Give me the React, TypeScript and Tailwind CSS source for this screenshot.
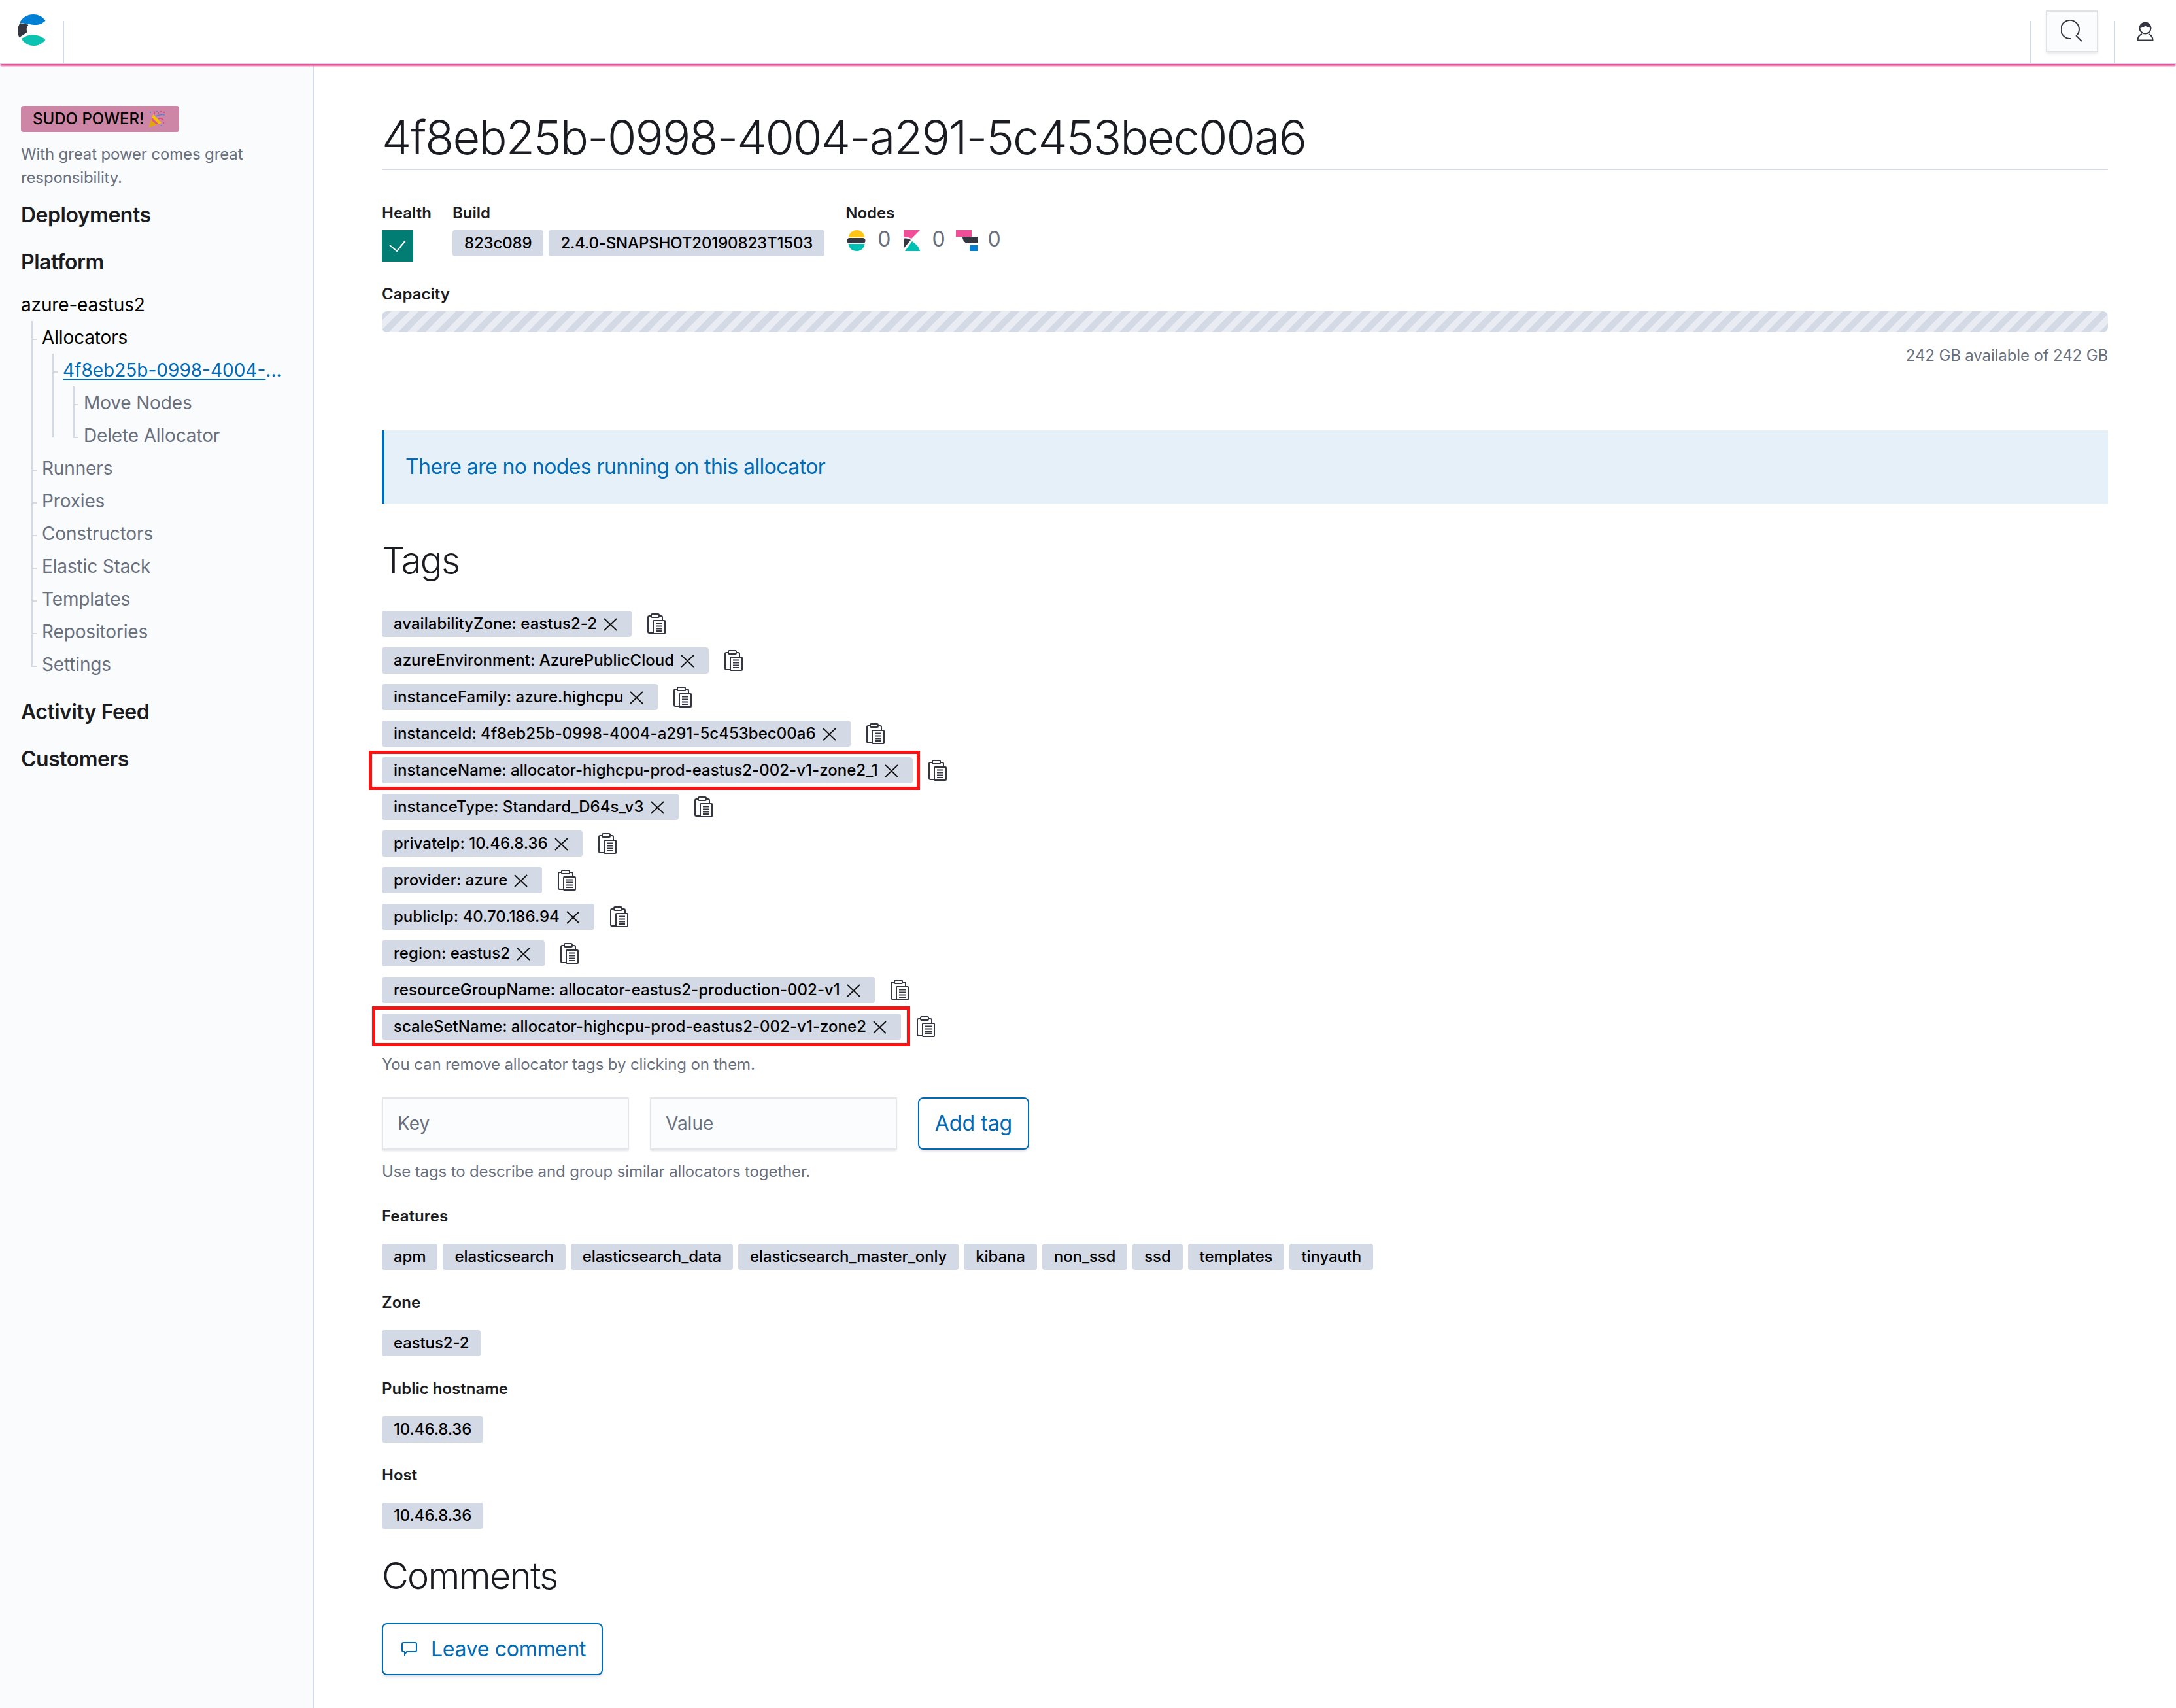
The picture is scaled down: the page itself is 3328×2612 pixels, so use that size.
import React from 'react';

const tags = [
    { text: 'availabilityZone: eastus2-2' },
    { text: 'azureEnvironment: AzurePublicCloud' },
    { text: 'instanceFamily: azure.highcpu' },
    { text: 'instanceId: 4f8eb25b-0998-4004-a291-5c453bec00a6' },
    { text: 'instanceName: allocator-highcpu-prod-eastus2-002-v1-zone2_1', box: 'first' },
    { text: 'instanceType: Standard_D64s_v3' },
    { text: 'privateIp: 10.46.8.36' },
    { text: 'provider: azure' },
    { text: 'publicIp: 40.70.186.94' },
    { text: 'region: eastus2' },
    { text: 'resourceGroupName: allocator-eastus2-production-002-v1' },
    { text: 'scaleSetName: allocator-highcpu-prod-eastus2-002-v1-zone2', box: 'second' },
];

const features = ['apm', 'elasticsearch', 'elasticsearch_data', 'elasticsearch_master_only', 'kibana', 'non_ssd', 'ssd', 'templates', 'tinyauth'];

const Logo = () => (
    <svg width="45" height="50" viewBox="78 63 134 150" className="ml-[26px] mt-[21px]">
        <path fill="#0080d5" d="M90 104C102 80 125 66 152 66C175 66 195 76 208 95C195 106 182 113 168 114C155 115 145 112 130 110C118 108 102 106 90 104Z" />
        <path fill="#343741" d="M92 106L130 113C122 125 118 135 126 147L88 172C78 150 78 125 92 106Z" />
        <path fill="#0cc2b0" d="M98 178C112 168 128 160 152 160C170 162 190 165 208 182C195 200 175 210 152 210C130 210 110 198 98 178Z" />
    </svg>
);

const Popper = () => (
    <svg width="26" height="26" viewBox="0 0 26 26" className="ml-[7px]">
        <path fill="#f7c000" d="M1 25L7 6L20 19Z" />
        <path fill="#e0a800" d="M1 25L4.500 14L12 21.500Z" />
        <path fill="#d9578f" d="M5.500 11L15 20L12 21.300L4.300 14.500Z" />
        <path fill="none" stroke="#3f8fe0" strokeWidth="1.500" d="M11 9C15 7 20 6 25 7" />
        <path fill="none" stroke="#e0457f" strokeWidth="1.500" d="M9 6C10 4 9 2 8 1M15 13C18 11 21 12 23 15" />
        <path fill="#e0457f" d="M18 0h2v2h-2zM23 2h2v2h-2zM22 18h2v2h-2zM14 3h2v2h-2z" />
        <path fill="#3f8fe0" d="M2 2h2v2H2zM12 0h2v2h-2zM19 22h2v2h-2z" />
    </svg>
);

const Cross = () => (
    <svg width="21" height="20" viewBox="0 0 21 20" className="ml-[10px] mr-1 mt-[2px] shrink-0">
        <path fill="none" stroke="#111" strokeWidth="1.8" d="M1 1L20 19M20 1L1 19" />
    </svg>
);

const CopyIcon = () => (
    <svg width="28" height="32" viewBox="0 0 28 32" className="shrink-0">
        <g fill="none" stroke="#343741" strokeWidth="2">
            <path d="M6 4H3a2 2 0 0 0-2 2v22a2 2 0 0 0 2 2h6" />
            <path d="M18 4h3a2 2 0 0 1 2 2v5" />
            <rect x="6" y="1" width="12" height="5" rx="1.5" />
            <rect x="9" y="11" width="18" height="20" rx="1" />
            <path d="M13 15.500h10M13 19.500h10M13 23.500h10M13 27h10" />
        </g>
    </svg>
);

const Badge: React.FC<{ children: React.ReactNode; className?: string }> = ({ children, className }) => (
    <span className={`inline-flex h-10 items-center whitespace-nowrap rounded-[4px] bg-[#d3dae6] px-[18px] text-[24px] font-medium text-black ${className || ''}`}>{children}</span>
);

const Label: React.FC<{ children: React.ReactNode; className?: string }> = ({ children, className }) => (
    <div className={`text-[24px] leading-[36px] font-semibold text-[#1a1c21] ${className || ''}`}>{children}</div>
);

// one row of the side tree, with the little tick going out of the vertical line
const TreeItem: React.FC<{ children: React.ReactNode; sub?: React.ReactNode; muted?: boolean }> = ({ children, sub, muted }) => (
    <li className="relative">
        <div className="absolute left-0 top-[27px] h-[2px] w-2 bg-[#d3dae6]" />
        <div className={`flex h-[50px] items-center pl-4 text-[28px] tracking-[-0.15px] ${muted ? 'text-[#69707d]' : 'text-black'}`}>{children}</div>
        {sub}
    </li>
);

const TreeList: React.FC<{ children: React.ReactNode; className: string }> = ({ children, className }) => (
    <ul className={`relative ${className}`}>
        <div className="absolute bottom-[22px] left-0 top-0 w-[2px] bg-[#d3dae6]" />
        {children}
    </ul>
);

const Sidebar = () => (
    <aside className="w-[480px] shrink-0 border-r-2 border-[#d3dae6] bg-[#fafbfd] pl-8 pt-16">
        <div className="flex h-10 w-[242px] items-center rounded-[4px] bg-[#ce86a6] pl-[18px] text-[24px] font-medium text-black">
            SUDO POWER!
            <Popper />
        </div>
        <p className="mt-4 w-[380px] text-[24px] leading-[36px] tracking-[-0.13px] text-[#69707d]">With great power comes great responsibility.</p>
        <div className="mt-[19px] text-[32px] leading-[40px] font-semibold tracking-[-0.5px] text-[#1a1c21]">Deployments</div>
        <div className="mt-8 text-[32px] leading-[40px] font-semibold tracking-[-0.5px] text-[#1a1c21]">Platform</div>
        <div className="mt-5 flex h-[50px] items-center text-[28px] tracking-[-0.15px] text-black">azure-eastus2</div>
        <TreeList className="ml-4">
            <TreeItem
                sub={
                    <TreeList className="ml-8">
                        <TreeItem
                            sub={
                                <TreeList className="ml-8">
                                    <TreeItem muted>Move Nodes</TreeItem>
                                    <TreeItem muted>Delete Allocator</TreeItem>
                                </TreeList>
                            }
                        >
                            <span className="tracking-normal text-[#006bb4]">
                                <span className="underline underline-offset-[3px]">4f8eb25b-0998-4004-</span>...
                            </span>
                        </TreeItem>
                    </TreeList>
                }
            >
                Allocators
            </TreeItem>
            <TreeItem muted>Runners</TreeItem>
            <TreeItem muted>Proxies</TreeItem>
            <TreeItem muted>Constructors</TreeItem>
            <TreeItem muted>Elastic Stack</TreeItem>
            <TreeItem muted>Templates</TreeItem>
            <TreeItem muted>Repositories</TreeItem>
            <TreeItem muted>Settings</TreeItem>
        </TreeList>
        <div className="mt-[28px] text-[32px] leading-[40px] font-semibold tracking-[-0.5px] text-[#1a1c21]">Activity Feed</div>
        <div className="mt-8 text-[32px] leading-[40px] font-semibold tracking-[-0.5px] text-[#1a1c21]">Customers</div>
    </aside>
);

const Header = () => (
    <header className="relative z-10 flex h-[98px] border-b-2 border-[#d3dae6] bg-white shadow-[0_4px_2px_-1px_#f04e98]">
        <div className="w-[96px] shrink-0">
            <Logo />
        </div>
        <div className="mt-8 h-16 w-[2px] bg-[#d3dae6]" />
        <div className="flex-1" />
        <div className="mt-8 h-16 w-[2px] bg-[#d3dae6]" />
        <div className="ml-[22px] mt-4 flex h-16 w-20 items-center justify-center border-2 border-[#e0e2e6] bg-[#fbfcfd] shadow-[0_3px_4px_-1px_rgba(152,162,179,0.25)]">
            <svg width="34" height="34" viewBox="0 0 34 34">
                <g fill="none" stroke="#343741" strokeWidth="2">
                    <path d="M15 27.900A14 14 0 1 1 25 22.500" />
                    <path d="M23 23L32 32" />
                </g>
            </svg>
        </div>
        <div className="ml-6 mt-8 h-16 w-[2px] bg-[#d3dae6]" />
        <div className="ml-[33px] mr-[34px] mt-[33px]">
            <svg width="26" height="30" viewBox="0 0 26 30">
                <circle cx="13" cy="10" r="8.500" fill="none" stroke="#343741" strokeWidth="2" />
                <path fill="#343741" d="M4.500 10A8.500 8.500 0 0 1 21.500 10C18 8.500 15 8 13 6.500C11 8.500 8 9.500 4.500 10Z" />
                <path fill="none" stroke="#343741" strokeWidth="2" d="M8 19C4 20.500 1.500 24 1.500 28.500H24.500C24.500 24 22 20.500 18 19" />
            </svg>
        </div>
    </header>
);

const NodeCount: React.FC<{ icon: React.ReactNode; className: string }> = ({ icon, className }) => (
    <div className="flex items-start">
        {icon}
        <span className={`text-[32px] leading-[28px] text-[#69707d] ${className}`}>0</span>
    </div>
);

const Stats = () => (
    <div className="mt-[48px] flex gap-8">
        <div>
            <Label className="h-[44px]">Health</Label>
            <div className="flex h-12 w-12 items-center justify-center bg-[#017d73]">
                <svg width="26" height="18" viewBox="0 0 26 18">
                    <path fill="none" stroke="#fff" strokeWidth="2" d="M1 8L12 17L25 1" />
                </svg>
            </div>
        </div>
        <div>
            <Label className="h-[44px]">Build</Label>
            <div className="flex gap-2">
                <Badge className="tracking-[-0.15px]">823c089</Badge>
                <Badge className="tracking-[-0.15px]">2.4.0-SNAPSHOT20190823T1503</Badge>
            </div>
        </div>
        <div>
            <Label className="h-[44px]">Nodes</Label>
            <div className="flex pl-[2px]">
                <NodeCount
                    className="ml-[18px] mr-5"
                    icon={
                        <svg width="29" height="32" viewBox="0 0 28 32">
                            <path fill="#fec514" d="M2 11C3 5 8 0 15 0C21 0 26 4 27 11Z" />
                            <path fill="#343741" d="M4 12H24a4 4 0 0 1 0 8H4a4 4 0 0 1 0-8Z" />
                            <path fill="#00bfb3" d="M2 21H27C26 28 21 32 15 32C8 32 3 28 2 21Z" />
                        </svg>
                    }
                />
                <NodeCount
                    className="ml-[18px] mr-4"
                    icon={
                        <svg width="25" height="32" viewBox="0 0 25 32">
                            <path fill="#f04e98" d="M0 0H25L12 13C8 11 4 10 0 11Z" />
                            <path fill="#343741" d="M0 13C4 12 8 13 11 15L0 28Z" />
                            <path fill="#00bfb3" d="M13 17C19 21 24 26 25 32H2Z" />
                        </svg>
                    }
                />
                <NodeCount
                    className="ml-4"
                    icon={
                        <svg width="33" height="32" viewBox="0 0 33 32">
                            <path fill="#f04e98" d="M0 0H24V10H0Z" />
                            <path fill="#343741" d="M10 10H33V20H19C14 20 10 16 10 10Z" />
                            <path fill="#0080d5" d="M21 23H33V32H21Z" />
                        </svg>
                    }
                />
            </div>
        </div>
    </div>
);

const TagRow: React.FC<{ text: string; box?: string }> = ({ text, box }) => (
    <div className="relative flex items-center gap-6">
        <Badge className="tracking-[0.03px]">
            {text}
            <Cross />
        </Badge>
        <CopyIcon />
        {box === 'first' && <div className="absolute left-[-20px] top-[-10px] h-[60px] w-[843px] border-[5px] border-[#f61414]" />}
        {box === 'second' && <div className="absolute left-[-15px] top-[-11px] h-[61px] w-[823px] border-[5px] border-[#f61414]" />}
    </div>
);

const Block: React.FC<{ label: string; items: string[] }> = ({ label, items }) => (
    <div className="mt-8">
        <Label>{label}</Label>
        <div className="mt-6 flex gap-2">
            {items.map((item) => (
                <Badge key={item} className="tracking-[-0.11px]">{item}</Badge>
            ))}
        </div>
    </div>
);

export default function App() {
    return (
        <div className="flex min-h-[2612px] flex-col bg-white font-['Inter',sans-serif]">
            <Header />
            <div className="flex flex-1">
                <Sidebar />
                <main className="min-w-0 flex-1 px-[104px]">
                    <h1 className="mt-[68px] h-[94px] border-b-2 border-[#d3dae6] text-[72px] leading-[88px] font-light tracking-[-1.9px] text-[#1a1c21]">4f8eb25b-0998-4004-a291-5c453bec00a6</h1>
                    <Stats />
                    <Label className="mt-8">Capacity</Label>
                    <div className="mt-2 h-8 rounded-lg bg-[repeating-linear-gradient(135deg,#d3dae6_0,#d3dae6_10px,#e9edf3_10px,#e9edf3_20px)]" />
                    <div className="mt-[18px] text-right text-[24px] leading-[36px] tracking-[-0.13px] text-[#69707d]">242 GB available of 242 GB</div>
                    <div className="mt-24 flex h-28 items-center border-l-4 border-[#006bb4] bg-[#e6f0f8] pl-8 text-[32px] tracking-[-0.6px] text-[#006bb4]">There are no nodes running on this allocator</div>
                    <h2 className="mt-[53px] text-[56px] leading-[68px] font-light tracking-[-1.7px] text-[#1a1c21]">Tags</h2>
                    <div className="mt-[43px] flex flex-col gap-4">
                        {tags.map((tag) => (
                            <TagRow key={tag.text} text={tag.text} box={tag.box} />
                        ))}
                    </div>
                    <div className="mt-5 text-[24px] leading-[36px] tracking-[-0.13px] text-[#69707d]">You can remove allocator tags by clicking on them.</div>
                    <div className="mt-8 flex gap-8">
                        <input placeholder="Key" className="h-20 w-[378px] border-2 border-[#e4e6ea] bg-[#fbfcfd] px-[22px] text-[28px] shadow-[0_3px_3px_-1px_rgba(152,162,179,0.3)] placeholder:text-[#69707d]" />
                        <input placeholder="Value" className="h-20 w-[378px] border-2 border-[#e4e6ea] bg-[#fbfcfd] px-[22px] text-[28px] shadow-[0_3px_3px_-1px_rgba(152,162,179,0.3)] placeholder:text-[#69707d]" />
                        <button className="h-20 w-[170px] rounded-lg border-2 border-[#006bb4] bg-white text-[32px] text-[#006bb4] shadow-[0_3px_4px_-1px_rgba(152,162,179,0.4)]">Add tag</button>
                    </div>
                    <div className="mt-4 text-[24px] leading-[36px] tracking-[-0.13px] text-[#69707d]">Use tags to describe and group similar allocators together.</div>
                    <Block label="Features" items={features} />
                    <Block label="Zone" items={['eastus2-2']} />
                    <Block label="Public hostname" items={['10.46.8.36']} />
                    <Block label="Host" items={['10.46.8.36']} />
                    <h2 className="mt-[38px] text-[56px] leading-[68px] font-light tracking-[-1.7px] text-[#1a1c21]">Comments</h2>
                    <button className="mt-[38px] flex h-20 w-[338px] items-center rounded-lg border-2 border-[#006bb4] bg-white pl-7 text-[32px] tracking-[-0.3px] text-[#006bb4] shadow-[0_3px_4px_-1px_rgba(152,162,179,0.4)]">
                        <svg width="24" height="22" viewBox="0 0 24 22" className="mr-[21px]">
                            <path fill="none" stroke="#006bb4" strokeWidth="2" d="M3 1H21a2 2 0 0 1 2 2V13a2 2 0 0 1-2 2H8L5 19V15H3a2 2 0 0 1-2-2V3a2 2 0 0 1 2-2Z" />
                        </svg>
                        Leave comment
                    </button>
                </main>
            </div>
        </div>
    );
}
